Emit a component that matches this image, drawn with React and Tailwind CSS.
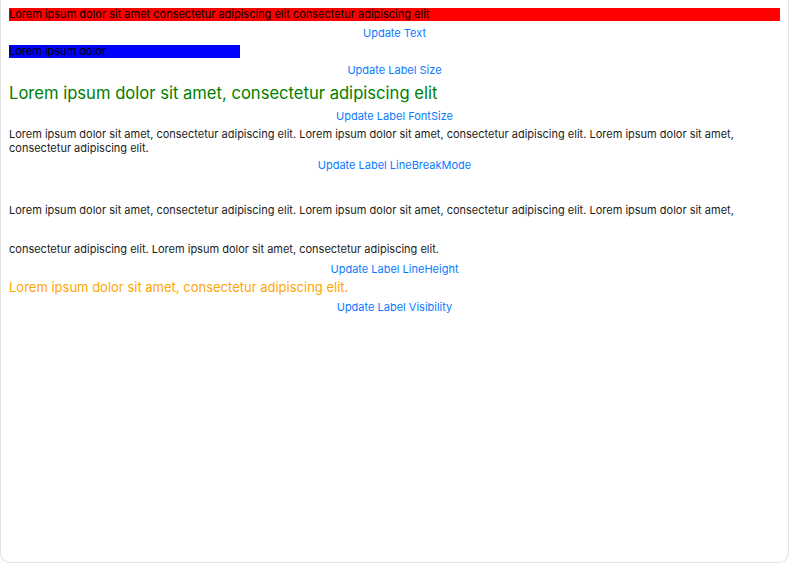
const lorem = 'Lorem ipsum dolor sit amet, consectetur adipiscing elit.';

function ActionButton({ children }) {
    return (
        <button className="self-center text-[11px] leading-[14px] text-[#0a7aff]">
            {children}
        </button>
    );
}

export default function App() {
    return (
        <div className="w-[789px] h-[563px] bg-white rounded-b-[10px] border-x border-b border-[#e2e2e2] overflow-hidden font-['Inter','Liberation_Sans',sans-serif]">
            <div className="flex flex-col gap-[5px] pt-[8px] px-[8px]">
                <div className="bg-[#ff0000] text-black text-[11px] leading-[13px]">
                    Lorem ipsum dolor sit amet consectetur adipiscing elit consectetur adipiscing elit
                </div>
                <ActionButton>Update Text</ActionButton>

                <div className="w-[231px] bg-[#0000ff] text-black text-[11px] leading-[13px]">
                    Lorem ipsum dolor
                </div>
                <ActionButton>Update Label Size</ActionButton>

                <div className="text-[#008000] text-[16.6px] leading-[22px]">
                    Lorem ipsum dolor sit amet, consectetur adipiscing elit
                </div>
                <ActionButton>Update Label FontSize</ActionButton>

                <p className="-mt-[1px] -mb-[2px] text-[#1c1c1c] text-[11px] leading-[14px]">
                    {lorem} {lorem} {lorem}
                </p>
                <ActionButton>Update Label LineBreakMode</ActionButton>

                {/* line height 39 — glyphs sit at the bottom of each line in the original */}
                <p className="mt-[14px] -mb-[12px] text-[#1c1c1c] text-[11px] leading-[39px]">
                    {lorem} {lorem} {lorem} {lorem}
                </p>
                <ActionButton>Update Label LineHeight</ActionButton>

                <div className="-mt-[1px] text-[#ffa500] text-[13px] leading-[15px]">
                    {lorem}
                </div>
                <ActionButton>Update Label Visibility</ActionButton>
            </div>
        </div>
    );
}
